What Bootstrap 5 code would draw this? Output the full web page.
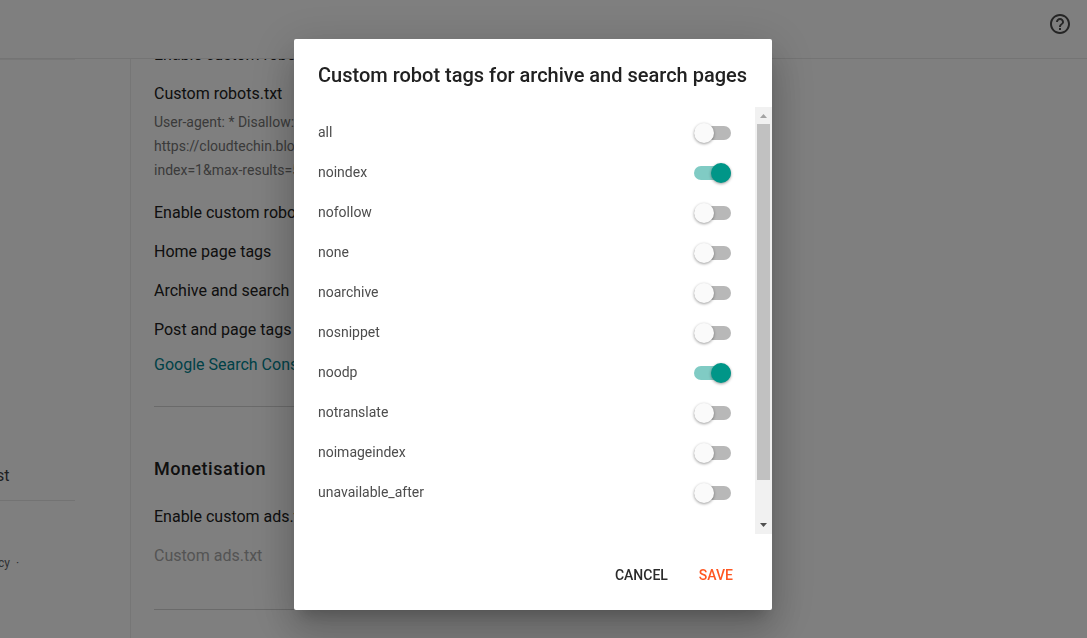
<!DOCTYPE html>
<html lang="en">
<head>
<meta charset="utf-8">
<meta name="viewport" content="width=device-width, initial-scale=1">
<title>Blogger settings</title>
<link rel="stylesheet" href="https://cdn.jsdelivr.net/npm/bootstrap@5.3.0/dist/css/bootstrap.min.css">
<style>
  body { font-family: Roboto, "Liberation Sans", sans-serif; font-size: 16px; color: #212121; background: #fff; }
  .topbar { height: 59px; border-bottom: 1px solid #e8e8e8; padding: 0 17px 10px; flex: none; }
  .side { width: 131px; border-right: 1px solid #ececec; flex: none; font-size: 14px; }
  .side-group { width: 75px; height: 442px; border-top: 1px solid #efefef; border-bottom: 1px solid #e6e6e6; padding-bottom: 12px; }
  .side-item { line-height: 24px; margin-left: -4px; font-size: 16px; color: #3c4043; }
  .side-foot { line-height: 20px; margin-top: 52px; margin-left: -2px; font-size: 12px; color: #5f6368; }
  .pane { padding-left: 23px; margin-top: -24px; width: 500px; }
  .setting { height: 39px; line-height: 39px; }
  .setting-gap { margin-top: 11px; }
  .desc { font-size: 14px; line-height: 24px; color: #757575; margin-top: -3px; }
  .rule { height: 1px; background: #d4d4d4; margin-top: 26px; }
  .rule-end { margin-top: 34px; }
  .section-title { font-size: 18px; font-weight: 500; line-height: 24px; letter-spacing: .5px; margin: 50px 0 16px; }
  .console { color: #00838f; line-height: 31px; height: 31px; }
  .off { color: #a8a8a8; }
  .robot-dialog { width: 478px; max-width: none; margin: 39px 0 0 294px; }
  .robot-content { height: 571px; border: 0; border-radius: 2px; box-shadow: 0 11px 15px -7px rgba(0,0,0,.2), 0 24px 38px 3px rgba(0,0,0,.14), 0 9px 46px 8px rgba(0,0,0,.12); }
  .robot-title { font-size: 20px; font-weight: 500; line-height: 24px; color: #212121; white-space: nowrap; }
  .robot-header { height: 68px; padding: 24px 24px 20px; border: 0; align-items: flex-start; }
  .robot-body { height: 427px; padding: 0; flex: none; }
  .tags { padding: 5px 24px 0 24px; }
  .tag-row { height: 40px; font-size: 14px; line-height: 20px; color: #4d4d4d; }
  .toggle { width: 37px; height: 14px; border-radius: 7px; background: #b8b8b8; margin-top: 2px; }
  .toggle::before { content: ""; width: 20px; height: 20px; border-radius: 50%; background: #fafafa; flex: none; box-shadow: 0 1px 3px rgba(0,0,0,.4); }
  .toggle.is-on { background: #80cbc4; justify-content: flex-end; }
  .toggle.is-on::before { background: #009688; }
  .scroller { width: 17px; background: #f1f1f1; }
  .scroller svg { flex: none; }
  .thumb { width: 13px; height: 356px; background: #c1c1c1; }
  .robot-footer { border: 0; padding: 24px 31px 0 0; flex-wrap: nowrap; align-items: flex-start; gap: 15px; }
  .flat { font-size: 14px; font-weight: 500; line-height: 34px; padding: 0 8px; border: 0; margin: 0; color: #2b2b2b; }
  .flat.save { color: #ff5722; }
</style>
</head>
<body class="vh-100 overflow-hidden d-flex flex-column">
<header class="topbar d-flex align-items-center justify-content-end">
  <svg width="20" height="20" viewBox="2 2 20 20" fill="#4a4a4a" aria-label="Help"><path d="M11 18h2v-2h-2v2zm1-16C6.480 2 2 6.480 2 12s4.480 10 10 10 10-4.480 10-10S17.520 2 12 2zm0 18c-4.410 0-8-3.590-8-8s3.590-8 8-8 8 3.590 8 8-3.590 8-8 8zm0-14c-2.210 0-4 1.790-4 4h2c0-1.100.9-2 2-2s2 .9 2 2c0 2-3 1.750-3 5h2c0-2.250 3-2.500 3-5 0-2.210-1.790-4-4-4z"/></svg>
</header>
<div class="d-flex flex-grow-1 overflow-hidden">
  <aside class="side overflow-hidden">
    <div class="side-group d-flex flex-column justify-content-end"><div class="side-item">st</div></div>
    <div class="side-foot">cy &nbsp;·</div>
  </aside>
  <main class="pane">
    <div class="setting">Enable custom robots.txt</div>
    <div class="setting">Custom robots.txt</div>
    <div class="desc">User-agent: * Disallow:<br>https://cloudtechin.blo<br>index=1&amp;max-results=5</div>
    <div class="setting setting-gap">Enable custom robots</div>
    <div class="setting">Home page tags</div>
    <div class="setting">Archive and search</div>
    <div class="setting">Post and page tags</div>
    <div class="console">Google Search Console</div>
    <div class="rule"></div>
    <h2 class="section-title">Monetisation</h2>
    <div class="setting">Enable custom ads.txt</div>
    <div class="setting off">Custom ads.txt</div>
    <div class="rule rule-end"></div>
  </main>
</div>
<div class="modal-backdrop show"></div>
<div class="modal d-block overflow-hidden" role="dialog" aria-labelledby="robotTitle">
  <div class="modal-dialog robot-dialog">
    <div class="modal-content robot-content">
      <div class="modal-header robot-header"><h1 class="modal-title robot-title" id="robotTitle">Custom robot tags for archive and search pages</h1></div>
      <div class="modal-body robot-body d-flex">
        <div class="tags flex-grow-1">
          <div class="tag-row d-flex justify-content-between align-items-center">all<span class="toggle d-flex align-items-center"></span></div>
          <div class="tag-row d-flex justify-content-between align-items-center">noindex<span class="toggle is-on d-flex align-items-center"></span></div>
          <div class="tag-row d-flex justify-content-between align-items-center">nofollow<span class="toggle d-flex align-items-center"></span></div>
          <div class="tag-row d-flex justify-content-between align-items-center">none<span class="toggle d-flex align-items-center"></span></div>
          <div class="tag-row d-flex justify-content-between align-items-center">noarchive<span class="toggle d-flex align-items-center"></span></div>
          <div class="tag-row d-flex justify-content-between align-items-center">nosnippet<span class="toggle d-flex align-items-center"></span></div>
          <div class="tag-row d-flex justify-content-between align-items-center">noodp<span class="toggle is-on d-flex align-items-center"></span></div>
          <div class="tag-row d-flex justify-content-between align-items-center">notranslate<span class="toggle d-flex align-items-center"></span></div>
          <div class="tag-row d-flex justify-content-between align-items-center">noimageindex<span class="toggle d-flex align-items-center"></span></div>
          <div class="tag-row d-flex justify-content-between align-items-center">unavailable_after<span class="toggle d-flex align-items-center"></span></div>
        </div>
        <div class="scroller d-flex flex-column align-items-center">
          <svg width="17" height="17"><path d="M5 11l3.500-4 3.500 4z" fill="#a3a3a3"/></svg>
          <div class="thumb"></div>
          <svg class="mt-auto" width="17" height="17"><path d="M5 6l3.500 4L12 6z" fill="#505050"/></svg>
        </div>
      </div>
      <div class="modal-footer robot-footer">
        <button type="button" class="btn flat">CANCEL</button>
        <button type="button" class="btn flat save">SAVE</button>
      </div>
    </div>
  </div>
</div>
<script src="https://cdn.jsdelivr.net/npm/bootstrap@5.3.0/dist/js/bootstrap.bundle.min.js"></script>
</body>
</html>
